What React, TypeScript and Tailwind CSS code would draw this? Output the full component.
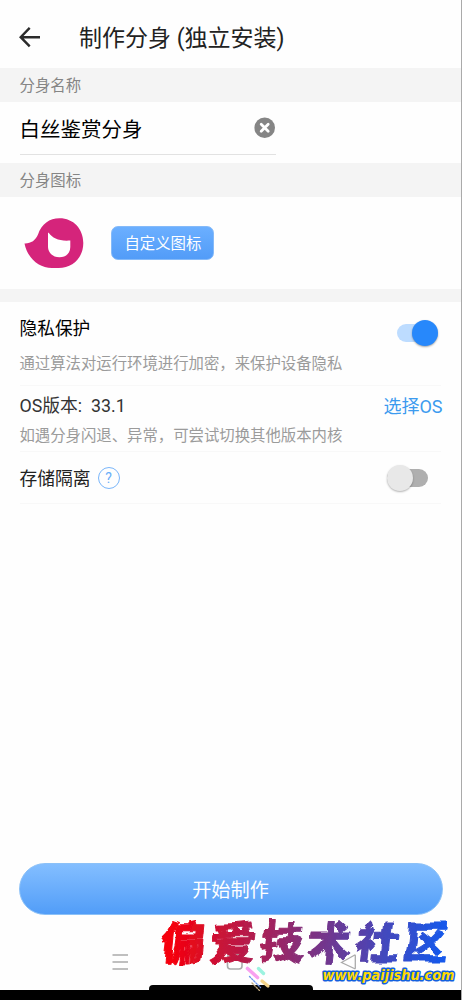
import type { ReactNode } from "react";

function SectionLabel({ children }: { children: ReactNode }) {
  return (
    <div className="flex h-[34px] items-center bg-[#f4f4f4] px-[19.5px] pt-[3px] text-[15.4px] text-[#858585]">
      {children}
    </div>
  );
}

function BackIcon() {
  return (
    <svg className="h-6 w-6" viewBox="0 0 24 24" fill="none" stroke="#2b2b2b" strokeWidth="2.4">
      <path d="M11.700 .9 2.700 10.200l9 9.200M2.700 10.200h19.300" />
    </svg>
  );
}

function ClearIcon() {
  return (
    <svg className="h-[22px] w-[22px]" viewBox="0 0 22 22">
      <circle cx="10.700" cy="10.800" r="10.300" fill="#858585" />
      <path d="m7.200 7.300 7 7m0-7-7 7" stroke="#fff" strokeWidth="2.800" strokeLinecap="round" />
    </svg>
  );
}

function AppLogo() {
  return (
    <svg className="h-[50px] w-[60px]" viewBox="0 0 60 50">
      <path
        d="M.5 25.4C7 25.6 11.500 22.500 14 16.500C17.500 6 25.500 .3 35.500 .3C49.500 .3 59.300 11 59.300 25C59.300 39.500 49 50 34.500 50H28C14.500 50 3.500 40 .5 25.400Z"
        fill="#d5247b"
      />
      <path
        d="M24.500 14.500C29 20.500 35 23.300 46.300 22.500V29C46.300 35.500 41.500 39.300 35.500 39.300C28.500 39.300 24 34.500 24 28.500V15.200Z"
        fill="#fff"
      />
    </svg>
  );
}

function Watermark() {
  return (
    <svg className="absolute top-[890px] left-[140px] h-[110px] w-[321px]" viewBox="-10 -20 321 110">
      <defs>
        <linearGradient id="brush" gradientUnits="userSpaceOnUse" x1="25" y1="0" x2="298" y2="0">
          <stop offset="0" stopColor="#f5000c" />
          <stop offset="0.500" stopColor="#80317f" />
          <stop offset="1" stopColor="#1459ec" />
        </linearGradient>
        <filter id="rough" x="-5%" y="-20%" width="110%" height="140%">
          <feTurbulence type="fractalNoise" baseFrequency="0.050" numOctaves="1" seed="4" />
          <feDisplacementMap in="SourceGraphic" scale="12" xChannelSelector="R" yChannelSelector="G" />
        </filter>
      </defs>
      <g
        className="font-['Noto_Sans_CJK_SC',sans-serif] text-[44px] font-black"
        fill="url(#brush)"
        stroke="url(#brush)"
        strokeWidth="1"
        strokeLinejoin="round"
        filter="url(#rough)"
      >
        <text x="14 65 114 161 209 258" y="49" transform="skewX(-6)">
          偏爱技术社区
        </text>
      </g>
      <g fill="none" strokeLinecap="round">
        <path d="m97.500 58.500 10 9" stroke="#f8a0ef" strokeWidth="3.600" />
        <path d="m108.500 58.500 5 5" stroke="#9cf3e0" strokeWidth="3.400" />
        <path d="m112 71 6 5" stroke="#f6d58b" strokeWidth="3.200" />
        <path d="m99.500 66.500 11 11" stroke="#6c97ee" strokeWidth="1.300" strokeDasharray="1.500 1.500" />
        <path d="m102 73 8 8" stroke="#bda77e" strokeWidth="1.300" strokeDasharray="1.500 1.500" />
      </g>
      <text
        className="font-['DejaVu_Sans',sans-serif] text-[13.5px] font-bold italic"
        x="172.500"
        y="70"
        textLength="132"
        lengthAdjust="spacingAndGlyphs"
        fill="#ffd900"
        stroke="#1261df"
        strokeWidth="3"
        strokeLinejoin="round"
        paintOrder="stroke"
      >
        www.paijishu.com
      </text>
    </svg>
  );
}

export default function App() {
  return (
    <div className="relative flex h-[1000px] w-[462px] flex-col overflow-hidden border-r border-[#aaa] bg-[#fefefe] font-['Roboto','Noto_Sans_CJK_SC',sans-serif] text-[#222]">
      <header className="flex h-[68px] shrink-0 items-center gap-[37px] pt-[10px] pl-[18px]">
        <BackIcon />
        <h1 className="text-[23px] leading-8 whitespace-nowrap">制作分身 (独立安装)</h1>
      </header>

      <SectionLabel>分身名称</SectionLabel>
      <div className="h-[61px] shrink-0 px-[19.5px]">
        <div className="flex h-[53px] w-[256.5px] items-center justify-between border-b border-[#e2e2e2] text-[20.5px] text-black">
          <span className="pt-[4px]">白丝鉴赏分身</span>
          <ClearIcon />
        </div>
      </div>

      <SectionLabel>分身图标</SectionLabel>
      <div className="flex h-[92px] shrink-0 items-center gap-[27px] pl-[24.400px]">
        <AppLogo />
        <button className="h-[34px] w-[103px] rounded-[7px] border border-[#85baf9] bg-linear-to-b from-[#6bafff] to-[#529cf8] pt-[3px] text-[15.4px] text-white">
          自定义图标
        </button>
      </div>
      <div className="h-[13px] shrink-0 bg-[#f4f4f4]" />

      <main className="flex flex-1 flex-col pr-[20px] pl-[19.5px]">
        <section className="h-[84px] border-b border-[#f8f8f8] pt-[14px]">
          <div className="flex h-[27px] items-center justify-between">
            <h2 className="text-[17.7px] text-black">隐私保护</h2>
            <div className="mt-[6px] mr-[3px] flex h-[18px] w-[41px] items-center justify-end rounded-full bg-[#bddcff]">
              <div className="h-[26px] w-[26px] shrink-0 rounded-full bg-[#2788fb] shadow-[0_1px_2px_rgba(0,0,0,0.35)]" />
            </div>
          </div>
          <p className="mt-[9px] text-[15.38px] leading-6 whitespace-nowrap text-[#9b9b9b]">
            通过算法对运行环境进行加密，来保护设备隐私
          </p>
        </section>

        <section className="h-[66px] border-b border-[#f8f8f8] pt-[7px]">
          <div className="flex h-[26px] items-center justify-between text-[17.8px]">
            <h2 className="text-[#333]">OS版本:&nbsp; 33.1</h2>
            <button className="-mr-[1.5px] text-[18px] text-[#3c9bef]">选择OS</button>
          </div>
          <p className="mt-[5px] text-[15.38px] leading-6 whitespace-nowrap text-[#9b9b9b]">
            如遇分身闪退、异常，可尝试切换其他版本内核
          </p>
        </section>

        <section className="flex h-[52px] items-center border-b border-[#f8f8f8]">
          <h2 className="pt-[3px] text-[17.8px]">存储隔离</h2>
          <span className="ml-[7px] flex h-[22px] w-[22px] items-center justify-center rounded-full border-[1.5px] border-[#7ab6fa] text-[14px] leading-none text-[#69adf8]">
            ?
          </span>
          <div className="mr-[13px] ml-auto flex h-[18px] w-[41px] items-center rounded-full bg-[#afafaf]">
            <div className="h-[26px] w-[26px] shrink-0 rounded-full bg-[#e8e8e8] shadow-[0_1px_2px_rgba(0,0,0,0.3)]" />
          </div>
        </section>

        <button className="mt-auto mb-[9px] -ml-px h-[52px] w-[424px] rounded-full border border-[#8bc1f8] bg-linear-to-b from-[#83beff] to-[#519df8] pt-[4px] text-[19.2px] text-white">
          开始制作
        </button>
      </main>

      <nav className="relative flex h-[66px] shrink-0">
        <svg className="h-full w-full" viewBox="0 0 461 66" fill="none" stroke="#aaa" strokeWidth="1.6">
          <path d="M112.500 31H128M112.500 38H128M112.500 45H128" />
          <rect x="227.500" y="30.500" width="14.500" height="14.500" rx="3" />
          <path d="m341.500 38.500 12.800-7.300q1-.5 1 .7v12q0 1.200-1 .6Z" strokeWidth="1.300" />
        </svg>
        <div className="absolute bottom-0 left-[149px] h-[5px] w-[164px] rounded-t-sm bg-[#050505]" />
      </nav>
      <div className="-mr-px h-[10px] shrink-0 bg-black" />

      <Watermark />
    </div>
  );
}
